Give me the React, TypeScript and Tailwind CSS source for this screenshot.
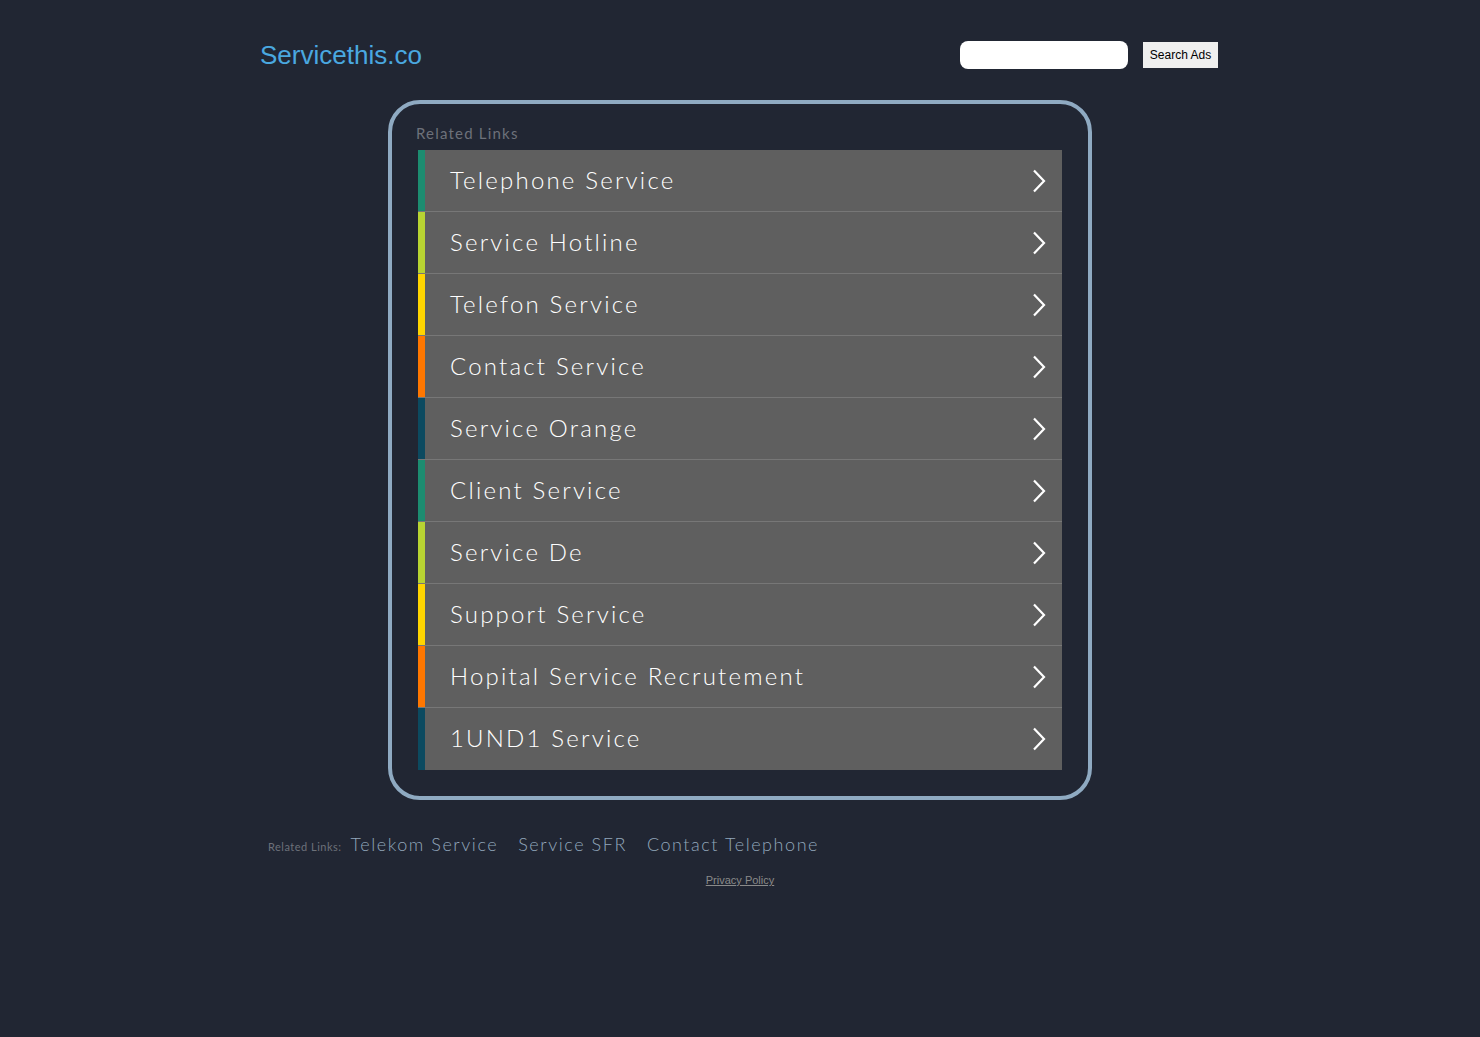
import React from 'react';

const links = [
  { label: 'Telephone Service', color: 'bg-[#1c8c70]' },
  { label: 'Service Hotline', color: 'bg-[#b8d432]' },
  { label: 'Telefon Service', color: 'bg-[#ffd500]' },
  { label: 'Contact Service', color: 'bg-[#ff7700]' },
  { label: 'Service Orange', color: 'bg-[#0c4a60]' },
  { label: 'Client Service', color: 'bg-[#1c8c70]' },
  { label: 'Service De', color: 'bg-[#b8d432]' },
  { label: 'Support Service', color: 'bg-[#ffd500]' },
  { label: 'Hopital Service Recrutement', color: 'bg-[#ff7700]' },
  { label: '1UND1 Service', color: 'bg-[#0c4a60]' },
];

const footerLinks = ['Telekom Service', 'Service SFR', 'Contact Telephone'];

function Chevron() {
  return (
    <svg width="14" height="24" viewBox="0 0 14 24" fill="none" className="shrink-0">
      <path d="M2 1.5 L12 12 L2 22.5" stroke="#ffffff" strokeWidth="2.2" />
    </svg>
  );
}

export default function App() {
  return (
    <div className="min-h-[1037px] bg-[#212633] font-['Lato',sans-serif]">
      <div className="w-[960px] mx-auto">
        {/* header */}
        <div className="flex items-center justify-between pt-[41px] h-[69px]">
          <a className="text-[26px] leading-none text-[#4aa8e0] font-['Liberation_Sans',Arial,sans-serif] -mt-[1px]">
            Servicethis.co
          </a>
          <div className="flex items-center gap-[15px] mr-[2px]">
            <div className="w-[168px] h-[28px] bg-white rounded-[8px]" />
            <button className="h-[26px] w-[75px] bg-[#efefef] text-[12px] text-black font-['Liberation_Sans',Arial,sans-serif]">
              Search Ads
            </button>
          </div>
        </div>

        {/* main box */}
        <div className="mt-[31px] mx-auto w-[704px] border-[4px] border-[#8faac2] rounded-[32px] pt-[18px] pb-[26px] px-[26px]">
          <div className="text-[15px] text-[#6d717a] tracking-[1.2px] -ml-[2px] h-[28px]">Related Links</div>
          <div className="w-[644px]">
            {links.map((l) => (
              <a key={l.label} className="flex h-[62px] bg-[#5f5f5f] border-b border-[#777777] last:border-b-0">
                <div className={`w-[7px] ${l.color}`} />
                <div className="flex flex-1 items-center justify-between pl-[25px] pr-[16px]">
                  <span className="text-[24px] text-white tracking-[2.2px] font-light -mt-[2px]">{l.label}</span>
                  <Chevron />
                </div>
              </a>
            ))}
          </div>
        </div>

        {/* footer links */}
        <div className="flex items-baseline mt-[31px] pl-[8px]">
          <span className="text-[11px] text-[#6d717a] tracking-[0.5px] mr-[9px]">Related Links:</span>
          {footerLinks.map((f) => (
            <a key={f} className="text-[18px] text-[#92a6bb] tracking-[1.55px] font-light mr-[20px]">
              {f}
            </a>
          ))}
        </div>
        <div className="text-center mt-[8px]">
          <a className="text-[11px] text-[#8a8a8a] underline font-['Liberation_Sans',Arial,sans-serif]">Privacy Policy</a>
        </div>
      </div>
    </div>
  );
}
